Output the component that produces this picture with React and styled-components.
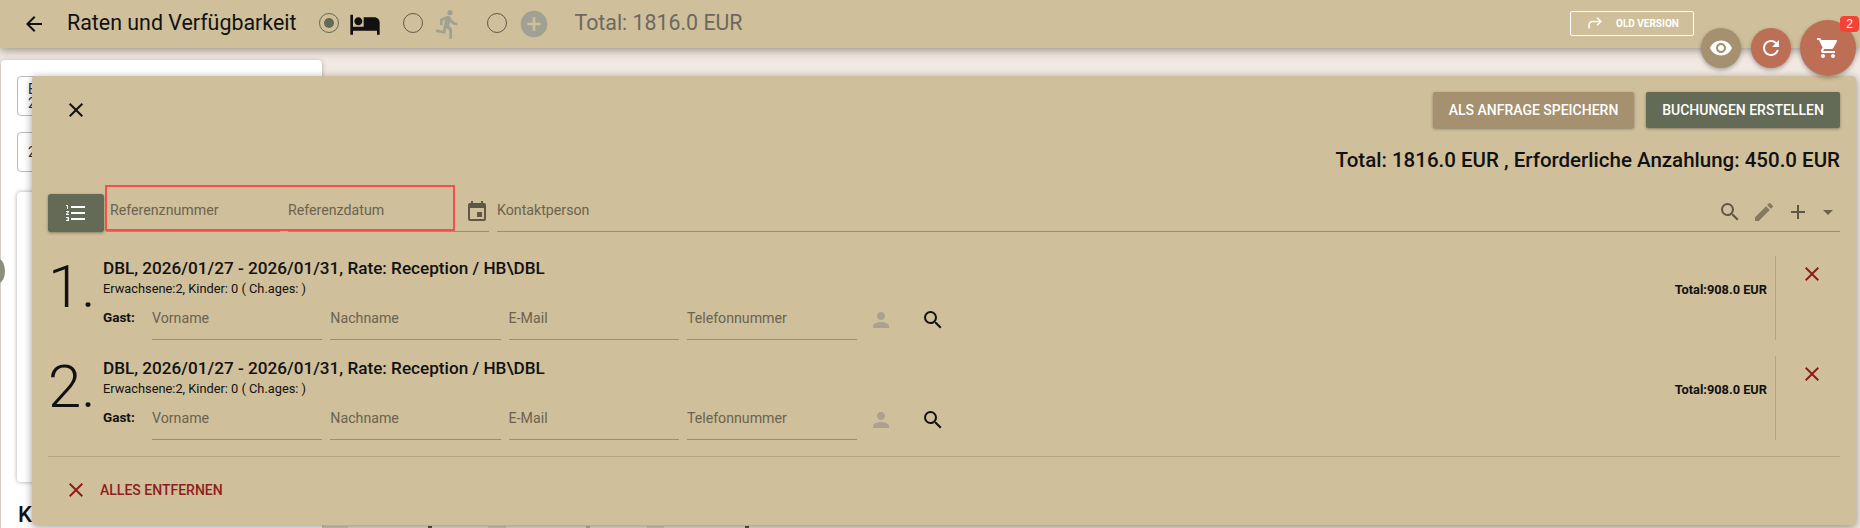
import styled, { createGlobalStyle } from "styled-components";
import {
  MdAdd,
  MdAddCircle,
  MdArrowBack,
  MdArrowDropDown,
  MdClose,
  MdDirectionsRun,
  MdEdit,
  MdEvent,
  MdFormatListNumbered,
  MdHotel,
  MdPerson,
  MdRefresh,
  MdSearch,
  MdShoppingCart,
  MdVisibility,
} from "react-icons/md";

const sand = "#cfbf9a";
const tan = "#a59070";
const olive = "#636a55";
const terracotta = "#bd6f55";
const line = "#9c8e6f";
const hint = "#6b6350";
const red = "#8f1d1d";

const GlobalStyle = createGlobalStyle`
  html, body {
    margin: 0;
    padding: 0;
    background: #f1e9e1;
    font-family: Roboto, "Liberation Sans", sans-serif;
  }
`;

const Page = styled.div`
  position: relative;
  width: 1860px;
  height: 528px;
  overflow: hidden;
  background: #f1e9e1;
`;

const Header = styled.header`
  position: relative;
  display: flex;
  align-items: center;
  height: 48px;
  padding: 0 10px 0 22px;
  background: ${sand};
  box-shadow: 0 2px 9px rgba(60, 50, 40, 0.5);
`;

const Title = styled.h1`
  margin: -4px 23px 0 21px;
  font-size: 21.4px;
  font-weight: 400;
  color: #111;
  white-space: nowrap;
`;

const Radio = styled.span`
  box-sizing: border-box;
  display: flex;
  flex: none;
  align-items: center;
  justify-content: center;
  width: 20px;
  height: 20px;
  margin-top: -2px;
  margin-right: ${(p) => p.$gap}px;
  border: 1.5px solid ${(p) => (p.$on ? olive : "#5f5a48")};
  border-radius: 50%;

  &::after {
    content: "";
    display: ${(p) => (p.$on ? "block" : "none")};
    width: 10px;
    height: 10px;
    border-radius: 50%;
    background: ${olive};
  }
`;

const Mode = styled.span`
  display: flex;
  margin-right: ${(p) => p.$gap}px;
  margin-top: -1px;
  color: ${(p) => p.$color};
`;

const HeaderTotal = styled.span`
  margin-top: -4px;
  font-size: 21.33px;
  color: #6c6860;
`;

const OldVersion = styled.button`
  display: flex;
  align-items: center;
  gap: 14px;
  box-sizing: border-box;
  width: 124px;
  height: 25px;
  margin: -2px 156px 0 auto;
  padding: 0 0 0 17px;
  border: 1px solid #fff;
  border-radius: 2px;
  background: transparent;
  color: #fff;
  font: 700 10px Roboto, sans-serif;
`;

const Body = styled.div`
  display: flex;
  height: 480px;
`;

const Card = styled.section`
  box-sizing: border-box;
  width: 321px;
  height: 480px;
  margin: 12px 0 0 1px;
  padding: 16px;
  background: #fff;
  border-radius: 4px;
  box-shadow: 0 1px 4px rgba(0, 0, 0, 0.3);
`;

const SmallField = styled.div`
  box-sizing: border-box;
  display: flex;
  flex-direction: column;
  justify-content: center;
  height: 40px;
  margin-bottom: ${(p) => p.$gap}px;
  padding: 0 10px;
  border: 1px solid #bbb;
  border-radius: 4px;
  font-size: 14px;
  line-height: 14px;
  color: #333;
`;

const InnerCard = styled.div`
  height: 290px;
  border-radius: 4px;
  box-shadow: 0 0 4px rgba(0, 0, 0, 0.35);
`;

const Behind = styled.div`
  margin: 22px 0 0 1px;
  font-size: 22px;
  line-height: 22px;
  font-weight: 500;
  color: #111;
`;

const TickRow = styled.div`
  display: flex;
  align-self: flex-end;
  height: 2px;
`;

const Tick = styled.span`
  width: ${(p) => p.$width}px;
  margin-left: ${(p) => p.$gap}px;
  background: ${(p) => p.$color};
`;

const Handle = styled.span`
  position: absolute;
  left: -8px;
  top: 259px;
  width: 13px;
  height: 24px;
  border-radius: 50%;
  background: #8d8d7b;
`;

const Modal = styled.div`
  position: absolute;
  left: 32px;
  top: 76px;
  width: 1824px;
  height: 449px;
  box-sizing: border-box;
  padding: 16px 16px 0;
  background: ${sand};
  border-radius: 4px;
  box-shadow: 0 2px 8px rgba(0, 0, 0, 0.4);
`;

const ModalTop = styled.div`
  display: flex;
  align-items: center;
  gap: 12px;
  height: 36px;
  padding-left: 16px;
`;

const CloseIcon = styled(MdClose)`
  margin-right: auto;
  color: #111;
`;

const ActionButton = styled.button`
  width: ${(p) => p.$width}px;
  height: 36px;
  padding: 0;
  border: 0;
  border-radius: 2px;
  background: ${(p) => p.$bg};
  color: #fff;
  font: 500 14px Roboto, sans-serif;
  box-shadow: 0 1px 3px rgba(0, 0, 0, 0.35);
`;

const GrandTotal = styled.div`
  margin-top: 21px;
  font-size: 20.5px;
  line-height: 22px;
  font-weight: 500;
  color: #111;
  text-align: right;
`;

const Toolbar = styled.div`
  display: flex;
  align-items: flex-end;
  height: 38px;
  margin-top: 23px;
`;

const ListButton = styled.button`
  display: flex;
  align-items: center;
  justify-content: center;
  width: 56px;
  height: 38px;
  margin-right: 2px;
  padding: 0;
  border: 0;
  border-radius: 3px;
  background: ${olive};
  color: #fff;
  box-shadow: 0 1px 3px rgba(0, 0, 0, 0.35);
`;

const ToolField = styled.div`
  box-sizing: border-box;
  display: flex;
  align-items: center;
  flex: ${(p) => (p.$grow ? "1" : `0 0 ${p.$width}px`)};
  height: 38px;
  margin-right: ${(p) => p.$gap || 0}px;
  padding-left: ${(p) => p.$pad || 0}px;
  padding-bottom: 2px;
  border-bottom: 1px solid ${line};
  font-size: 14.2px;
  color: ${hint};
`;

const FieldLabel = styled.span`
  margin-bottom: 3px;
`;

const DateIcon = styled(MdEvent)`
  margin-left: auto;
  color: #5f5745;
`;

const ToolIcons = styled.span`
  display: flex;
  align-items: center;
  margin-left: auto;
  color: #5f5745;
`;

const EditIcon = styled(MdEdit)`
  margin-left: 10px;
  color: #857a60;
`;

const AddIcon = styled(MdAdd)`
  margin-left: 10px;
`;

const CaretIcon = styled(MdArrowDropDown)`
  margin-left: 6px;
  color: ${hint};
`;

const Highlight = styled.div`
  position: absolute;
  left: 73px;
  top: 109px;
  width: 350px;
  height: 46px;
  box-sizing: border-box;
  border: 2px solid #f44f4f;
`;

const Rooms = styled.div`
  display: flex;
  flex-direction: column;
  gap: 16px;
  margin-top: 24px;
`;

const Room = styled.article`
  display: flex;
  height: 84px;
`;

const RoomNumber = styled.div`
  width: 55px;
  font-size: 60px;
  font-weight: 300;
  line-height: 61px;
  color: #111;
`;

const RoomBody = styled.div`
  flex: 1;
  padding-top: 2px;
`;

const RoomTitle = styled.div`
  font-size: 17.15px;
  line-height: 20px;
  font-weight: 500;
  color: #111;
`;

const RoomInfo = styled.div`
  margin-top: 4px;
  font-size: 12.8px;
  line-height: 14px;
  color: #111;
`;

const GuestRow = styled.div`
  display: flex;
  align-items: flex-start;
  margin-top: 3px;
`;

const GuestLabel = styled.span`
  width: 49px;
  margin-top: 10px;
  font-size: 13.5px;
  font-weight: 700;
  color: #111;
`;

const GuestField = styled.div`
  box-sizing: border-box;
  width: 170.3px;
  height: 41px;
  margin-right: 8px;
  padding-top: 11px;
  border-bottom: 1px solid ${line};
  font-size: 14.2px;
  color: ${hint};
`;

const GuestIcon = styled.span`
  display: flex;
  margin: ${(p) => p.$margin};
  color: ${(p) => p.$color};
`;

const RoomTotal = styled.div`
  align-self: flex-start;
  margin-top: 26px;
  font-size: 12.8px;
  line-height: 15px;
  font-weight: 700;
  color: #111;
`;

const RoomRemove = styled.div`
  display: flex;
  align-items: flex-start;
  width: 40px;
  margin-left: 8px;
  padding: 6px 0 0 24px;
  border-left: 1px solid #b3a585;
  color: ${red};
`;

const Divider = styled.hr`
  margin: 16px 0 0;
  border: 0;
  border-top: 1px solid #b3a585;
`;

const RemoveAll = styled.button`
  display: flex;
  align-items: center;
  gap: 12px;
  margin: 21px 0 0 16px;
  padding: 0;
  border: 0;
  background: transparent;
  color: ${red};
  font: 500 14px Roboto, sans-serif;
`;

const Fab = styled.button`
  position: absolute;
  top: ${(p) => p.$top}px;
  left: ${(p) => p.$left}px;
  display: flex;
  align-items: center;
  justify-content: center;
  width: ${(p) => p.$size}px;
  height: ${(p) => p.$size}px;
  padding: 0;
  border: 0;
  border-radius: 50%;
  background: ${(p) => p.$bg};
  color: #fff;
  box-shadow: 0 2px 4px rgba(0, 0, 0, 0.3);
`;

const Badge = styled.span`
  position: absolute;
  left: 40px;
  top: -4px;
  width: 19px;
  height: 16px;
  border-radius: 4px;
  background: #f44336;
  font-size: 12px;
  line-height: 16px;
  text-align: center;
  color: #fff;
`;

const guestFields = ["Vorname", "Nachname", "E-Mail", "Telefonnummer"];

const ticks = [
  { gap: 1, width: 25, color: "#d8d2cc" },
  { gap: 80, width: 4, color: "#555" },
  { gap: 56, width: 18, color: "#d8d2cc" },
  { gap: 80, width: 4, color: "#bbb" },
  { gap: 57, width: 17, color: "#d8d2cc" },
  { gap: 81, width: 4, color: "#555" },
];

const ShareArrow = () => (
  <svg width="14" height="12" viewBox="0 0 14 12" fill="none" stroke="#fff" strokeWidth="1.5">
    <path d="M1 11.5V8.5C1 6 2.5 4.5 5 4.5H12.5" />
    <path d="M9 0.8L13 4.5L9 8.2" />
  </svg>
);

const RoomRow = ({ index }) => (
  <Room>
    <RoomNumber>{index}.</RoomNumber>
    <RoomBody>
      <RoomTitle>DBL, 2026/01/27 - 2026/01/31, Rate: Reception / HB\DBL</RoomTitle>
      <RoomInfo>Erwachsene:2, Kinder: 0 ( Ch.ages: )</RoomInfo>
      <GuestRow>
        <GuestLabel>Gast:</GuestLabel>
        {guestFields.map((name) => (
          <GuestField key={name}>{name}</GuestField>
        ))}
        <GuestIcon $color="#aaa28e" $margin="9px 0 0 4px">
          <MdPerson size={24} />
        </GuestIcon>
        <GuestIcon $color="#111" $margin="9px 0 0 28px">
          <MdSearch size={24} />
        </GuestIcon>
      </GuestRow>
    </RoomBody>
    <RoomTotal>Total:908.0 EUR</RoomTotal>
    <RoomRemove>
      <MdClose size={24} />
    </RoomRemove>
  </Room>
);

const App = () => {
  return (
    <Page>
      <GlobalStyle />
      <Header>
        <MdArrowBack size={24} color="#111" />
        <Title>Raten und Verfügbarkeit</Title>
        <Radio $on $gap={10} />
        <Mode $color="#111" $gap={22}>
          <MdHotel size={32} />
        </Mode>
        <Radio $gap={9} />
        <Mode $color="#a0a093" $gap={23}>
          <MdDirectionsRun size={32} />
        </Mode>
        <Radio $gap={11} />
        <Mode $color="#a0a093" $gap={24}>
          <MdAddCircle size={32} />
        </Mode>
        <HeaderTotal>Total: 1816.0 EUR</HeaderTotal>
        <OldVersion>
          <ShareArrow />
          OLD VERSION
        </OldVersion>
      </Header>

      <Body>
        <Card>
          <SmallField $gap={16}>
            <span>B</span>
            <span>2</span>
          </SmallField>
          <SmallField $gap={20}>2</SmallField>
          <InnerCard />
          <Behind>Ku</Behind>
        </Card>
        <TickRow>
          {ticks.map((tick, index) => (
            <Tick key={index} $gap={tick.gap} $width={tick.width} $color={tick.color} />
          ))}
        </TickRow>
      </Body>
      <Handle />

      <Modal>
        <ModalTop>
          <CloseIcon size={24} />
          <ActionButton $bg={tan} $width={201}>
            ALS ANFRAGE SPEICHERN
          </ActionButton>
          <ActionButton $bg={olive} $width={194}>
            BUCHUNGEN ERSTELLEN
          </ActionButton>
        </ModalTop>
        <GrandTotal>Total: 1816.0 EUR , Erforderliche Anzahlung: 450.0 EUR</GrandTotal>
        <Toolbar>
          <ListButton>
            <MdFormatListNumbered size={24} />
          </ListButton>
          <ToolField $width={174} $gap={8} $pad={4}>
            <FieldLabel>Referenznummer</FieldLabel>
          </ToolField>
          <ToolField $width={201} $gap={8}>
            <FieldLabel>Referenzdatum</FieldLabel>
            <DateIcon size={24} />
          </ToolField>
          <ToolField $grow>
            <FieldLabel>Kontaktperson</FieldLabel>
            <ToolIcons>
              <MdSearch size={24} />
              <EditIcon size={24} />
              <AddIcon size={24} />
              <CaretIcon size={24} />
            </ToolIcons>
          </ToolField>
        </Toolbar>
        <Highlight />
        <Rooms>
          <RoomRow index={1} />
          <RoomRow index={2} />
        </Rooms>
        <Divider />
        <RemoveAll>
          <MdClose size={24} />
          ALLES ENTFERNEN
        </RemoveAll>
      </Modal>

      <Fab $top={28} $left={1701} $size={40} $bg={tan}>
        <MdVisibility size={24} />
      </Fab>
      <Fab $top={28} $left={1751} $size={40} $bg={terracotta}>
        <MdRefresh size={24} />
      </Fab>
      <Fab $top={20} $left={1800} $size={56} $bg={terracotta}>
        <MdShoppingCart size={24} />
        <Badge>2</Badge>
      </Fab>
    </Page>
  );
};

export default App;
